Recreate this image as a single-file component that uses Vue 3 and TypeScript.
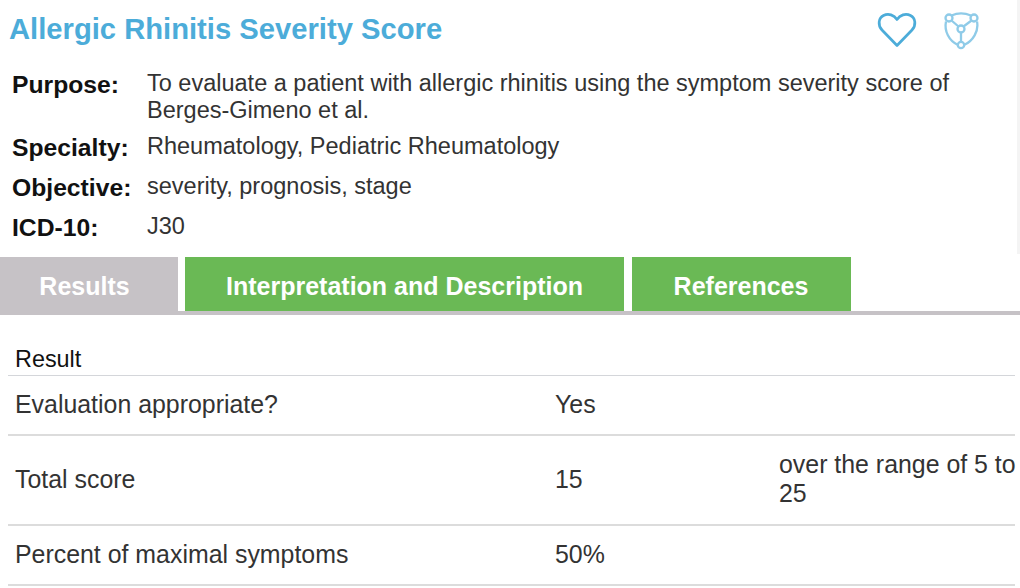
<script setup lang="ts">
interface Meta { label: string; lines: string[]; cls: string }
const meta: Meta[] = [
  { label: 'Purpose:', lines: ['To evaluate a patient with allergic rhinitis using the symptom severity score of', 'Berges-Gimeno et al.'], cls: 'm-purpose' },
  { label: 'Specialty:', lines: ['Rheumatology, Pediatric Rheumatology'], cls: 'm-specialty' },
  { label: 'Objective:', lines: ['severity, prognosis, stage'], cls: 'm-objective' },
  { label: 'ICD-10:', lines: ['J30'], cls: 'm-icd' },
]
const tabs = [
  { name: 'Results', cls: 'tab-results' },
  { name: 'Interpretation and Description', cls: 'tab-interp' },
  { name: 'References', cls: 'tab-refs' },
]
const rows = [
  { a: 'Evaluation appropriate?', b: 'Yes', c: '', cls: 'r1' },
  { a: 'Total score', b: '15', c: 'over the range of 5 to 25', cls: 'r2' },
  { a: 'Percent of maximal symptoms', b: '50%', c: '', cls: 'r3' },
]
</script>

<template>
  <div class="page">
    <div class="top">
      <header class="head">
        <h1>Allergic Rhinitis Severity Score</h1>
        <div class="icons">
          <svg class="heart" width="40" height="36" viewBox="0 0 40 36" fill="none">
            <path d="M20 33.500 L5 18 C0.500 13 1.500 6 6.500 3.500 C11.500 1 17 3 20 7.500 C23 3 28.500 1 33.500 3.500 C38.500 6 39.500 13 35 18 Z" stroke="#4cacd9" stroke-width="2.700" stroke-linejoin="round" />
          </svg>
          <svg class="net" width="36" height="38" viewBox="0 0 36 38" fill="none" stroke="#8fcbe8" stroke-width="2.300">
            <path d="M8.500 3.500 C14 1 22 1 28 3.500" />
            <path d="M3 9.500 C1 19 6 29 15 33" />
            <path d="M34 9.500 C36 19 30 29 21 33" />
            <circle cx="6" cy="6" r="3.500" />
            <circle cx="31" cy="6" r="3.500" />
            <circle cx="18" cy="17" r="3.500" />
            <circle cx="18" cy="33" r="3.200" />
            <path d="M8.500 8.500 L15.500 14.500 M28.500 8.500 L20.500 14.500 M18 20.500 L18 29.800" />
          </svg>
        </div>
      </header>

      <section class="meta">
        <div v-for="m in meta" :key="m.label" class="meta-row" :class="m.cls">
          <div class="meta-label">{{ m.label }}</div>
          <div class="meta-value"><div v-for="l in m.lines" :key="l">{{ l }}</div></div>
        </div>
      </section>
    </div>

    <nav class="tabs">
      <div v-for="t in tabs" :key="t.name" class="tab" :class="t.cls">{{ t.name }}</div>
    </nav>

    <section class="results">
      <div class="res-head">Result</div>
      <div v-for="r in rows" :key="r.a" class="res-row" :class="r.cls">
        <div class="c1">{{ r.a }}</div>
        <div class="c2">{{ r.b }}</div>
        <div class="c3">{{ r.c }}</div>
      </div>
    </section>
  </div>
</template>

<style>
html, body { margin: 0; background: #fff; overflow: hidden; }
</style>

<style scoped>
.page {
  width: 1020px;
  height: 588px;
  overflow: hidden;
  font-family: "Liberation Sans", Arial, sans-serif;
  color: #222;
  background: #fff;
}
.top {
  height: 254px;
  margin-bottom: 3px;
  border-right: 3px solid #f4f4f4;
}
.head {
  height: 70px;
  display: flex;
  align-items: flex-start;
  justify-content: space-between;
  padding-left: 9px;
}
h1 {
  margin: 12px 0 0;
  font-size: 29.200px;
  line-height: 34px;
  font-weight: 700;
  color: #4cacd9;
}
.icons {
  display: flex;
  gap: 26px;
  padding: 12px 38px 0 0;
  align-items: flex-start;
}
.meta { padding-left: 12px; }
.meta-row {
  display: flex;
  font-size: 23.500px;
  line-height: 27px;
}
.meta-label {
  width: 135px;
  margin-top: 1px;
  font-weight: 700;
  color: #111;
  font-size: 24.700px;
}
.meta-value { color: #333; }
.m-purpose { height: 63px; }
.m-specialty { height: 40px; }
.m-objective { height: 40px; }
.m-icd { height: 40px; }
.tabs {
  display: flex;
  gap: 7px;
  height: 54px;
  border-bottom: 4px solid #c6c2c6;
}
.tab {
  color: #fff;
  font-weight: 700;
  font-size: 25px;
  box-sizing: border-box;
  padding-top: 4px;
  display: flex;
  align-items: center;
  justify-content: center;
  background: #6ab955;
}
.tab-results {
  width: 178px;
  padding: 4px 9px 0 0;
  background: #c6c2c6;
}
.tab-interp { width: 439px; }
.tab-refs { width: 219px; margin-left: 1px; padding-right: 1px; }
.results { width: 1007px; padding: 26px 0 0 8px; }
.res-head {
  height: 34px;
  line-height: 36px;
  padding-left: 7px;
  font-size: 23.400px;
  color: #111;
  border-bottom: 1px solid #d4d6da;
}
.res-row {
  display: flex;
  align-items: center;
  font-size: 24.900px;
  line-height: 29px;
  color: #333;
  border-bottom: 2px solid #dcdcdc;
  padding-left: 7px;
}
.res-row > div { margin-top: -2px; }
.r1 { height: 58px; }
.r2 { height: 88px; }
.r3 { height: 58px; }
.c1 { width: 540px; flex-shrink: 0; }
.c2 { width: 224px; flex-shrink: 0; }
.c3 { width: 237px; flex-shrink: 0; }
</style>
